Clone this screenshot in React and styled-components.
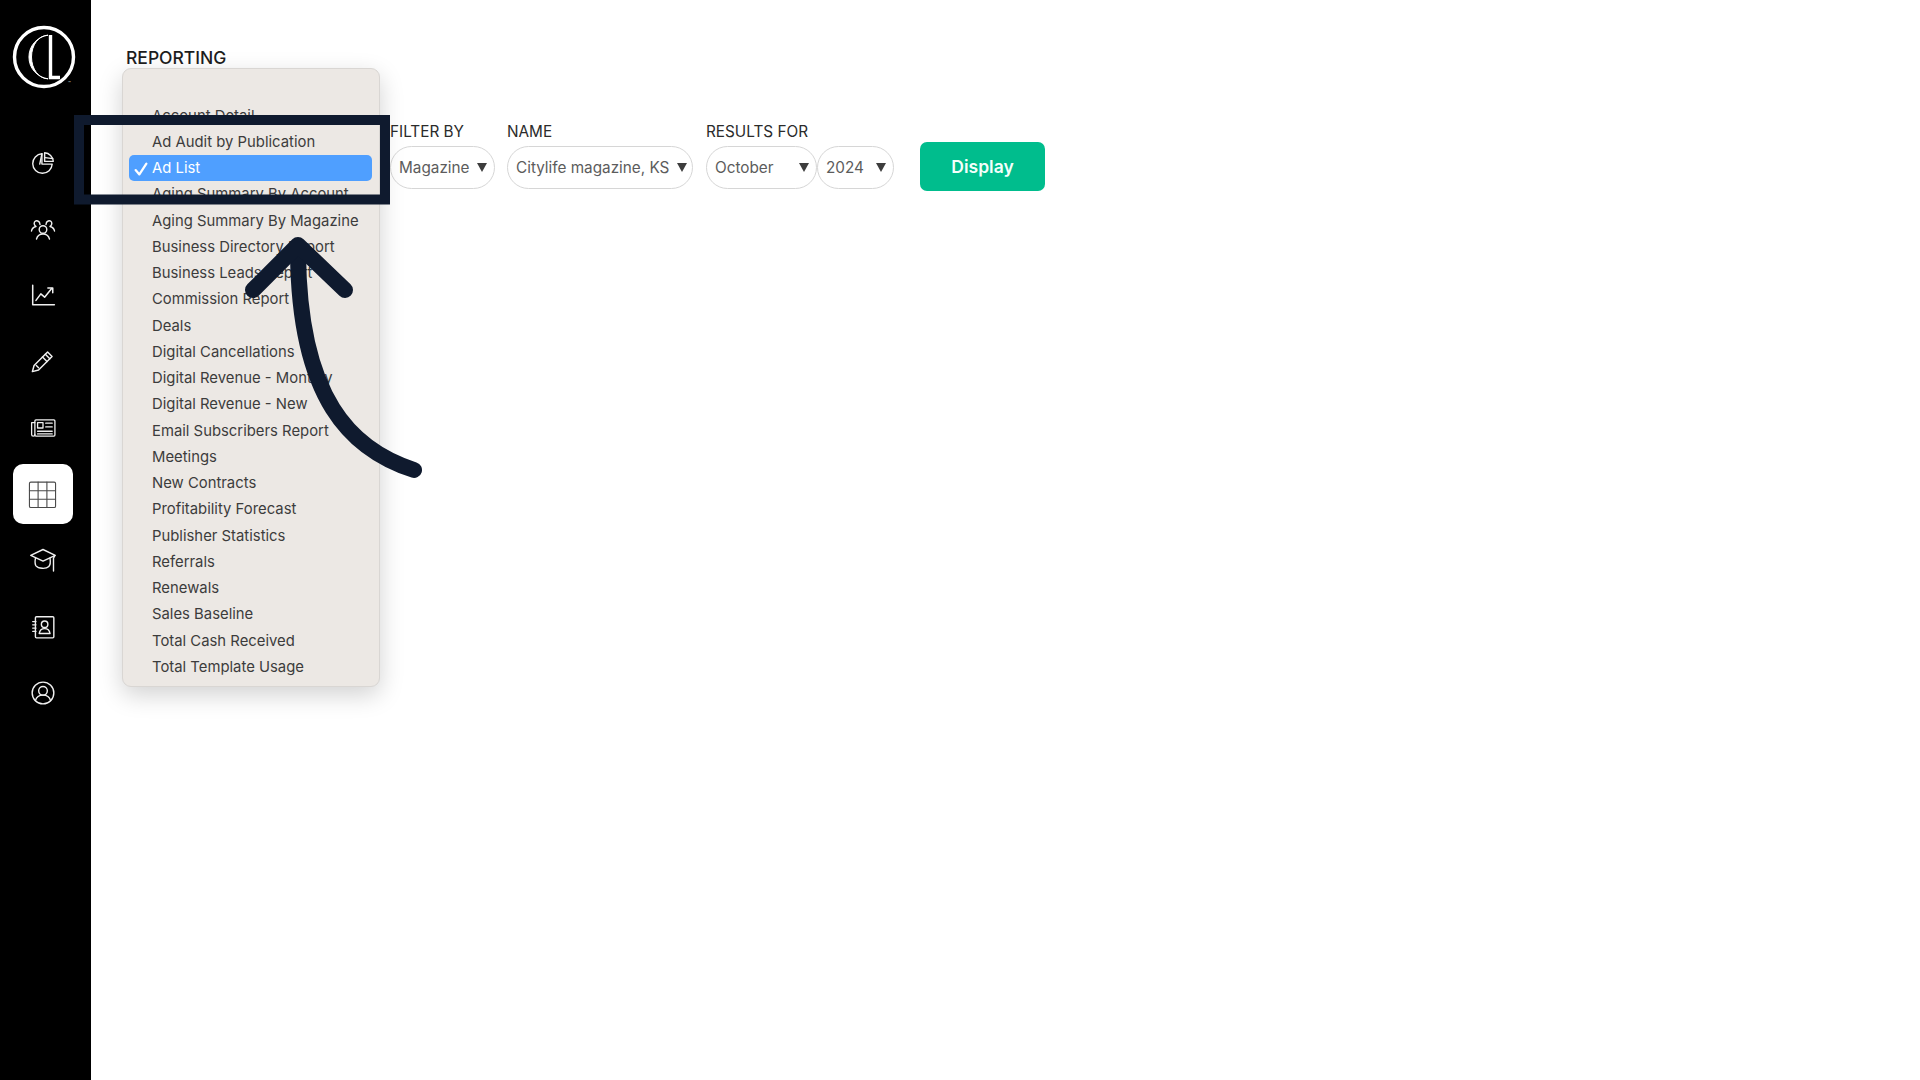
import React from 'react';
import styled, { createGlobalStyle } from 'styled-components';

const Global = createGlobalStyle`
  html, body { margin: 0; padding: 0; background: #fff; }
  body { font-family: Inter, "Liberation Sans", sans-serif; }
`;

const Page = styled.div`
  position: relative;
  display: flex;
  width: 100%;
  height: 100vh;
  min-height: 1080px;
  overflow: hidden;
  background: #fff;
`;

const Sidebar = styled.aside`
  flex: 0 0 91px;
  display: flex;
  flex-direction: column;
  align-items: center;
  background: #000;
  color: #fff;
`;

const LogoWrap = styled.div`
  width: 88px;
  height: 129.5px;
  margin-right: 3px;
  padding-top: 24px;
  box-sizing: border-box;
  display: flex;
  justify-content: center;
`;

const Nav = styled.nav`
  display: flex;
  flex-direction: column;
  align-items: center;
  margin-right: 6px;
`;

const NavItem = styled.div`
  width: 60px;
  height: 60px;
  margin: 3.15px 0;
  border-radius: 10px;
  display: flex;
  align-items: center;
  justify-content: center;
  background: ${p => (p.$active ? '#fff' : 'transparent')};
  color: ${p => (p.$active ? '#4a4a4a' : '#f0f0f0')};
`;

const Main = styled.main`
  flex: 1;
  padding: 47.5px 0 0 35px;
`;

const Title = styled.h1`
  margin: 0;
  font-size: 17.5px;
  line-height: 20px;
  font-weight: 500;
  color: #1d1d1d;
`;

const FilterBar = styled.div`
  display: flex;
  align-items: flex-end;
  margin: 55.5px 0 0 264px;
`;

const Field = styled.div`
  display: flex;
  flex-direction: column;
  gap: 5px;
  margin-right: ${p => p.$gap || 0}px;
`;

const FieldLabel = styled.label`
  font-size: 15.3px;
  line-height: 18px;
  color: #2b2b2b;
`;

const SelectRow = styled.div`
  display: flex;
`;

const Select = styled.div`
  box-sizing: border-box;
  width: ${p => p.$w}px;
  height: 43px;
  padding: 0 ${p => p.$pr || 7}px 0 8px;
  border: 1.5px solid #d6d6d6;
  border-radius: 22px;
  background: #fff;
  display: flex;
  align-items: center;
  justify-content: space-between;
  font-size: 15.3px;
  color: #5c5c5c;
  white-space: nowrap;
`;

const Caret = styled.span`
  width: 0;
  height: 0;
  border-left: 5px solid transparent;
  border-right: 5px solid transparent;
  border-top: 9px solid #3d3d3d;
`;

const DisplayButton = styled.button`
  width: 125px;
  height: 49px;
  margin: 0 0 -2px 26px;
  border: 0;
  border-radius: 7px;
  background: #00bd8d;
  color: #f4fffb;
  font-family: inherit;
  font-size: 17.5px;
  font-weight: 600;
`;

const Menu = styled.div`
  position: absolute;
  left: 122px;
  top: 68px;
  box-sizing: border-box;
  width: 258px;
  height: 619px;
  padding: 33.5px 7px 0 6px;
  border: 1px solid #d9d6d3;
  border-radius: 9px;
  background: #ece8e4;
  box-shadow: 0 8px 24px rgba(0, 0, 0, 0.18);
`;

const MenuItem = styled.div`
  height: 26.25px;
  line-height: 27.25px;
  padding-left: 23px;
  position: relative;
  border-radius: 5px;
  font-size: 14.85px;
  white-space: nowrap;
  background: ${p => (p.$selected ? '#4f9fff' : 'transparent')};
  color: ${p => (p.$selected ? '#fff' : '#3c3c3c')};
`;

const Check = styled.svg`
  position: absolute;
  left: 5px;
  top: 7px;
  width: 14px;
  height: 14px;
`;

const Annotation = styled.svg`
  position: absolute;
  left: 0;
  top: 0;
  width: 1920px;
  height: 1080px;
  pointer-events: none;
`;

const items = [
  'Account Detail', 'Ad Audit by Publication', 'Ad List', 'Aging Summary By Account',
  'Aging Summary By Magazine', 'Business Directory Report', 'Business Leads Report',
  'Commission Report', 'Deals', 'Digital Cancellations', 'Digital Revenue - Monthly',
  'Digital Revenue - New', 'Email Subscribers Report', 'Meetings', 'New Contracts',
  'Profitability Forecast', 'Publisher Statistics', 'Referrals', 'Renewals',
  'Sales Baseline', 'Total Cash Received', 'Total Template Usage',
];

const Ico = ({ size = 26, box = 24, sw = 1.3, children }) => (
  <svg width={size} height={size} viewBox={`0 0 ${box} ${box}`} fill="none" stroke="currentColor"
    strokeWidth={sw} strokeLinecap="round" strokeLinejoin="round">{children}</svg>
);

const icons = [
  <Ico><path d="M11 3.500a9 9 0 1 0 9.500 9.500H11z" /><path d="M11 3.500 9 13" /><path d="M13.500 2.500a8.500 8.500 0 0 1 8 8h-8z" /><path d="m14 7 7 1" /></Ico>,
  <Ico box={26} sw={1.4}>
    <circle cx="13" cy="13.500" r="3.800" />
    <path d="M6.500 23c1-3.500 3.500-5 6.500-5s5.500 1.500 6.500 5" />
    <path d="M10 8.500c0-3.500-4-5-5.500-2.500-1 2 .5 4 1.500 4.500-2 .5-4 1.500-4.500 4.500" />
    <path d="M16 8.500c0-3.500 4-5 5.500-2.500 1 2-.5 4-1.500 4.500 2 .5 4 1.500 4.500 4.500" />
  </Ico>,
  <Ico sw={1.4}><path d="M2.500 3v18h20" /><path d="M5.500 17l4.500-6 3.500 3 6.500-8" /><path d="M16.500 5.500h4.500V10" /></Ico>,
  <Ico size={27}><path d="m16.500 3.500 4 4L8.500 19.500l-5.500 1.500 1.500-5.500z" /><path d="m14.500 5.500 4 4" /><path d="m6.500 15.500 2 2" /><path d="m12 8 4 4" /></Ico>,
  <Ico sw={1.2}><rect x="4.500" y="4.500" width="18.500" height="15" rx="1" /><path d="M4.500 7H1.500v11a1.500 1.500 0 0 0 3 0" /><rect x="7" y="7" width="5" height="5" /><path d="M14.500 7.500h6M14.500 11h6M7 15h13.500M7 17.500h13.500" /></Ico>,
  <Ico size={33} sw={0.8}><rect x="2.500" y="3" width="19" height="18.500" rx="1" /><path d="M2.500 9.300h19M2.500 15.500h19M8.800 3v18.500M15.200 3v18.500" /></Ico>,
  <Ico size={28} sw={1.2}><path d="M12 3 1.500 8 12 13l10.500-5z" /><path d="M5.500 10.500c-.5 3-.5 5 .5 6.500 2 2.500 8.500 3 11 .5 1.500-1.500 1.500-4 1-7" /><path d="M22 8.500l-1 2v11" /></Ico>,
  <Ico sw={1.3}><rect x="5" y="2.500" width="17" height="19.500" rx="1" /><circle cx="13.500" cy="9.500" r="3" /><path d="M8.500 18c.5-3 2.500-4.500 5-4.500s4.500 1.500 5 4.500z" /><path d="M2.500 7h3M2.500 10h3M2.500 13h3M2.500 16h3" /></Ico>,
  <Ico sw={1.3}><circle cx="12" cy="12" r="10" /><circle cx="12" cy="10" r="4" /><path d="M5 19c1-3.500 3.500-5 7-5s6 1.500 7 5" /></Ico>,
];

const Logo = () => (
  <svg width="66" height="66" viewBox="0 0 66 66" fill="none" stroke="#fff">
    <circle cx="33" cy="33" r="29.500" strokeWidth="3.400" />
    <path d="M37 11.200A22 22 0 0 0 37 54.800 16.500 21.800 0 0 1 37 11.200Z" fill="#fff" strokeWidth="1" />
    <path d="M39.500 11V53.500H49" strokeWidth="3.400" />
    <text x="57" y="60.500" fill="#bbb" stroke="none" fontSize="4.500" fontFamily="Inter, sans-serif">™</text>
  </svg>
);

export default function App() {
  return (
    <Page>
      <Global />
      <Sidebar>
        <LogoWrap><Logo /></LogoWrap>
        <Nav>
          {icons.map((icon, i) => <NavItem key={i} $active={i === 5}>{icon}</NavItem>)}
        </Nav>
      </Sidebar>
      <Main>
        <Title>REPORTING</Title>
        <FilterBar>
          <Field $gap={12}>
            <FieldLabel>FILTER BY</FieldLabel>
            <Select $w={105}>Magazine<Caret /></Select>
          </Field>
          <Field $gap={13}>
            <FieldLabel>NAME</FieldLabel>
            <Select $w={186} $pr={5}>Citylife magazine, KS<Caret /></Select>
          </Field>
          <Field>
            <FieldLabel>RESULTS FOR</FieldLabel>
            <SelectRow>
              <Select $w={111}>October<Caret /></Select>
              <Select $w={77}>2024<Caret /></Select>
            </SelectRow>
          </Field>
          <DisplayButton>Display</DisplayButton>
        </FilterBar>
      </Main>
      <Menu>
        {items.map(t => (
          <MenuItem key={t} $selected={t === 'Ad List'}>
            {t === 'Ad List' && (
              <Check viewBox="0 0 13 13" fill="none" stroke="#fff" strokeWidth="2.100" strokeLinecap="round" strokeLinejoin="round">
                <path d="M1.500 7.500 5 11.500 11.500 1.500" />
              </Check>
            )}
            {t}
          </MenuItem>
        ))}
      </Menu>
      <Annotation viewBox="0 0 1920 1080" fill="none" stroke="#0f1a2e">
        <rect x="79" y="120" width="306" height="79.500" strokeWidth="10" />
        <path d="M414 470C352 450 298 400 298 248" strokeWidth="16" strokeLinecap="round" />
        <path d="M253 290 298 245 345 290" strokeWidth="16" strokeLinecap="round" strokeLinejoin="round" />
      </Annotation>
    </Page>
  );
}
